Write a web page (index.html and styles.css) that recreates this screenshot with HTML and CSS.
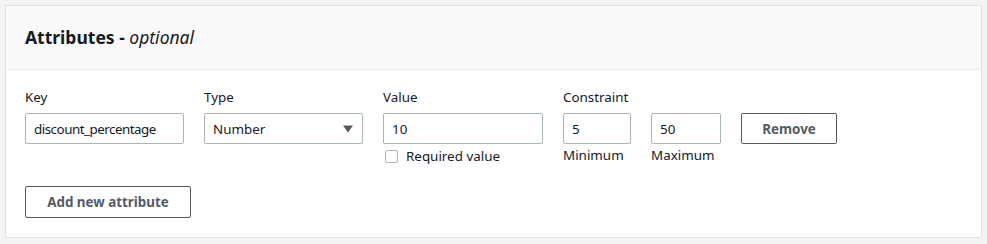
FILE: index.html
```html
<!DOCTYPE html>
<html>
<head>
<meta charset="utf-8">
<title>Attributes</title>
<link rel="stylesheet" href="styles.css">
</head>
<body>

	<div class="panel">
		<div class="panel-header">
			<h2>Attributes - <i>optional</i></h2>
		</div>
		<div class="panel-body">
			<div class="attr-row">
				<div class="field field-key">
					<label for="key">Key</label>
					<input type="text" id="key" class="text-input key-input" value="discount_percentage">
				</div>
				<div class="field field-type">
					<label>Type</label>
					<div class="select">
						<span>Number</span>
						<svg class="caret" width="10" height="8" viewBox="0 0 10 8"><path d="M0 0.5 L10 0.5 L5 7.5 Z" fill="#545b64"/></svg>
					</div>
				</div>
				<div class="field field-value">
					<label for="value">Value</label>
					<input type="text" id="value" class="text-input" value="10">
					<div class="check">
						<span class="check-box"></span>
						<span>Required value</span>
					</div>
				</div>
				<div class="field field-min">
					<label for="min">Constraint</label>
					<input type="text" id="min" class="text-input" value="5">
					<span class="hint">Minimum</span>
				</div>
				<div class="field field-max">
					<label for="max">&nbsp;</label>
					<input type="text" id="max" class="text-input" value="50">
					<span class="hint">Maximum</span>
				</div>
				<div class="field field-remove">
					<label>&nbsp;</label>
					<button class="btn btn-remove">Remove</button>
				</div>
			</div>
			<button class="btn btn-add">Add new attribute</button>
		</div>
	</div>

</body>
</html>
```

FILE: styles.css
```css
body {
	margin: 5px;
	background: #f2f3f3;
	font-family: "Noto Sans", "Open Sans", sans-serif;
	font-size: 13.4px;
	color: #16191f;
}

.panel {
	background: #ffffff;
	border: 1px solid #dfe2e2;
	box-shadow: 0 1px 1px 0 rgba(0, 28, 36, 0.3);
	box-sizing: border-box;
	height: 233px;
}

.panel-header {
	background: #fafafa;
	border-bottom: 1px solid #eaeded;
	height: 63px;
	padding: 0 19px;
	display: flex;
	align-items: center;
}

.panel-header h2 {
	margin: 0 0 2px 0;
	font-size: 17.5px;
	font-weight: 700;
	line-height: 22px;
}

.panel-header i {
	font-weight: 400;
}

.panel-body {
	padding: 16px 19px 0 19px;
}

.attr-row {
	display: flex;
	gap: 20px;
	align-items: flex-start;
}

.field {
	display: flex;
	flex-direction: column;
}

.field label {
	line-height: 22px;
	margin-bottom: 5px;
}

.field-key { width: 159px; }
.field-type { width: 159px; }
.field-value { width: 160px; }
.field-min { width: 68px; }
.field-max { width: 70px; }
.field-remove { width: 96px; }

.text-input {
	box-sizing: border-box;
	width: 100%;
	height: 31px;
	border: 1px solid #aab7b8;
	border-radius: 2px;
	padding: 0 8px;
	font-family: inherit;
	font-size: inherit;
	color: #16191f;
	margin: 0;
}

.key-input {
	letter-spacing: -0.5px;
}

.select {
	box-sizing: border-box;
	height: 31px;
	border: 1px solid #aab7b8;
	border-radius: 2px;
	padding: 0 9px 0 8px;
	display: flex;
	align-items: center;
	justify-content: space-between;
}

.check {
	display: flex;
	align-items: center;
	gap: 8px;
	margin-top: 2px;
	padding-left: 2px;
	line-height: 20px;
}

.check-box {
	width: 13px;
	height: 13px;
	border: 1px solid #aab7b8;
	border-radius: 2px;
	box-sizing: border-box;
}

.hint {
	margin-top: 1px;
	line-height: 20px;
}

.btn {
	box-sizing: border-box;
	background: #ffffff;
	border: 1px solid #545b64;
	border-radius: 2px;
	color: #545b64;
	font-family: inherit;
	font-size: inherit;
	font-weight: 700;
	height: 32px;
	padding: 0 20px;
	margin: 0;
	white-space: nowrap;
}

.btn-remove {
	width: 96px;
	height: 31px;
}

.btn-add {
	margin-top: 20px;
	width: 166px;
}
```
